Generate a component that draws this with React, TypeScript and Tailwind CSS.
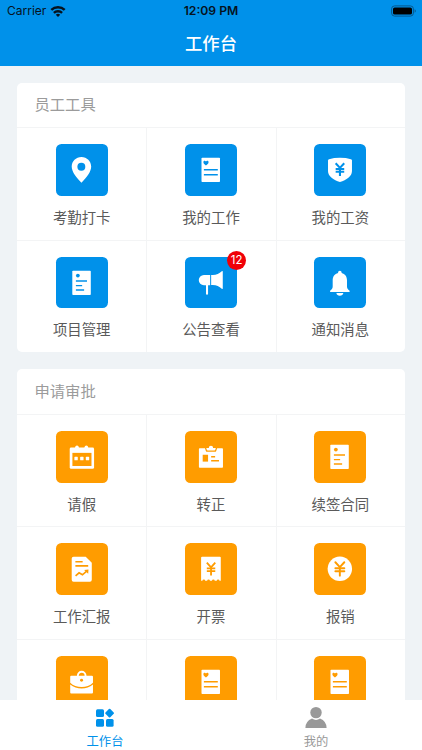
import type { ReactNode } from "react";
import { JapaneseYen } from "lucide-react";

type Tone = "blue" | "orange";
type Item = { label: string; icon: (c: string) => ReactNode; badge?: number };

const BLUE = "#0091ea";
const ORANGE = "#ff9c00";

const pin = (c: string) => (
  <>
    <path d="M25.6 13c-5.5 0-9.8 4.3-9.8 9.7 0 5.6 4.8 10.8 9.8 16.3 5-5.5 9.8-10.7 9.8-16.3 0-5.4-4.3-9.7-9.8-9.7Z" />
    <circle cx="25.5" cy="22.8" r="4" fill={c} />
  </>
);

const heartDoc = (c: string) => (
  <>
    <rect x="16.6" y="13.9" width="18.6" height="24.4" rx="0.8" />
    <path d="M21.1 21.6c-1.3-1-2.6-1.9-2.6-3.3 0-1.6 1.9-1.9 2.6-.7.7-1.2 2.6-.9 2.6.7 0 1.4-1.3 2.3-2.6 3.3Z" fill={c} />
    <path d="M19 25.9h14M19 30.9h14" stroke={c} strokeWidth="1.5" />
  </>
);

const shieldYen = (c: string) => (
  <>
    <path d="M14.1 16.6q0-1 1-1.3Q20 13.9 26.1 13.9t11.1 1.4q1 .3 1 1.3v10.6c0 5.2-5.6 9.3-12.1 11-6.5-1.7-12-5.8-12-11Z" />
    <JapaneseYen x="17.5" y="17.2" size={17.2} color={c} strokeWidth={2.9} strokeLinecap="butt" />
  </>
);

const listDoc = (c: string) => (
  <>
    <rect x="16.4" y="13.9" width="18.6" height="24.4" rx="0.8" />
    <circle cx="22" cy="18.7" r="1.9" fill={c} />
    <path d="M20 24.2h11.2M20 28.8h6.3M20 33.3h8.3" stroke={c} strokeWidth="1.5" />
  </>
);

const megaphone = () => (
  <>
    <path d="M19 18h6.3v10.3H23.2V37q0 1-1.05 1T21.1 37v-8.7H19a5.15 5.15 0 0 1 0-10.3Z" />
    <path d="M26.3 18.2h1.7c3.700 0 6.500-1.700 9-3.900q1-.7 1 .4v16.800q0 1-1 .4c-2.500-2.200-5.300-3.700-9-3.700h-1.700Z" />
  </>
);

const bell = () => (
  <>
    <path d="M24.2 16v-.4a1.8 1.8 0 0 1 3.6 0v.4c3.4.8 5.4 3.700 5.4 7.300v6.500c0 1.700.8 2.900 2.600 4.100v1.200H16.200v-1.200c1.800-1.200 2.600-2.400 2.600-4.100v-6.500c0-3.600 2-6.500 5.400-7.300Z" />
    <path d="M22.5 36.2h7c-.3 1.700-1.700 2.700-3.500 2.700s-3.200-1-3.500-2.700Z" />
  </>
);

const calendar = (c: string) => (
  <>
    <rect x="13.8" y="16.7" width="24.5" height="21.4" rx="1.5" />
    <rect x="19.3" y="14.5" width="3.6" height="5" rx="1.8" />
    <rect x="28.7" y="14.5" width="3.6" height="5" rx="1.8" />
    <rect x="16.5" y="22" width="19.2" height="13.2" fill={c} />
    <rect x="18.5" y="26" width="3.4" height="3.4" rx=".6" />
    <rect x="24.3" y="26" width="3.4" height="3.4" rx=".6" />
    <rect x="30" y="26" width="3.4" height="3.4" rx=".6" />
  </>
);

const idCard = (c: string) => (
  <>
    <rect x="14" y="17.3" width="24.2" height="19.6" rx="0.8" />
    <path d="M20 17h12.4l-1 3q-.3.9-1.3.9h-7.800q-1 0-1.300-.9Z" fill={c} />
    <path d="M21.4 17h2.500a2.200 2.200 0 0 1 4.400 0H31l-.5 1.900q-.2.700-1 .7h-6.600q-.8 0-1-.7Z" />
    <rect x="17.8" y="23.9" width="5.4" height="6.9" fill={c} />
    <path d="M26.3 26h4M26.3 29.9h7.9" stroke={c} strokeWidth="1.5" />
  </>
);

const report = (c: string) => (
  <>
    <path d="M17.7 13.8H29.900L36 19.800V37q0 1.900-1.900 1.900H17.700q-1.900 0-1.900-1.900V15.700q0-1.900 1.900-1.900Z" />
    <path d="M19.5 18.8h7.3M19.5 23h12.9" stroke={c} strokeWidth="1.6" />
    <path d="m19.700 33 3.500-3 3.400 2 4.600-3.900" fill="none" stroke={c} strokeWidth="1.7" />
    <path d="M28.300 27.200 32.700 26.600 32.400 31Z" fill={c} />
  </>
);

const receipt = (c: string) => (
  <>
    <path d="M17.2 13.9H35q1 0 1 1V38H16.2V14.900q0-1 1-1Z" />
    <g fill={c}>
      <circle cx="18.900" cy="38" r="1.350" />
      <circle cx="23.700" cy="38" r="1.350" />
      <circle cx="28.500" cy="38" r="1.350" />
      <circle cx="33.300" cy="38" r="1.350" />
    </g>
    <JapaneseYen x="17.700" y="17.700" size={17} color={c} strokeWidth={2.600} strokeLinecap="butt" />
  </>
);

const coin = (c: string) => (
  <>
    <circle cx="26" cy="26" r="12.3" />
    <JapaneseYen x="17" y="17.100" size={18} color={c} strokeWidth={2.600} />
  </>
);

const briefcase = (c: string) => (
  <>
    <path d="M22 20.500v-.8a3.850 3.850 0 0 1 7.700 0v.8" fill="none" stroke="#fff" strokeWidth="1.900" />
    <path d="M15.300 19.900H36.200q1 0 1 1V26.800c-3 2.900-7 4.400-11.400 4.400s-8.500-1.500-11.500-4.400V20.900q0-1 1-1Z" />
    <path d="M14.300 28.700c3.300 2.700 7.200 4.100 11.500 4.100s8.200-1.400 11.400-4.100v8.100q0 1-1 1H15.300q-1 0-1-1Z" />
    <circle cx="25.700" cy="24.500" r="1.500" fill={c} />
  </>
);

const tools: Item[] = [
  { label: "考勤打卡", icon: pin },
  { label: "我的工作", icon: heartDoc },
  { label: "我的工资", icon: shieldYen },
  { label: "项目管理", icon: listDoc },
  { label: "公告查看", icon: megaphone, badge: 12 },
  { label: "通知消息", icon: bell },
];

const approvals: Item[] = [
  { label: "请假", icon: calendar },
  { label: "转正", icon: idCard },
  { label: "续签合同", icon: listDoc },
  { label: "工作汇报", icon: report },
  { label: "开票", icon: receipt },
  { label: "报销", icon: coin },
  { label: "", icon: briefcase },
  { label: "", icon: heartDoc },
  { label: "", icon: heartDoc },
];

function Tile({ item, tone, divider }: { item: Item; tone: Tone; divider: boolean }) {
  const color = tone === "blue" ? BLUE : ORANGE;
  return (
    <div className={`flex h-[112.5px] flex-col items-center border-t border-t-[#f3f4f5] pt-4 ${divider ? "border-l border-l-[#f3f4f5] pr-px" : ""}`}>
      <div className={`relative size-[51.7px] rounded-[5.5px] ${tone === "blue" ? "bg-[#0091ea]" : "bg-[#ff9c00]"}`}>
        <svg viewBox="0 0 52 52" fill="#fff" className="size-full">{item.icon(color)}</svg>
        {item.badge && (
          <span className="absolute -top-[5.5px] -right-[9px] flex size-[18.5px] items-center justify-center rounded-full bg-[#f00008] font-['Inter'] text-[11.5px] leading-none text-white">
            {item.badge}
          </span>
        )}
      </div>
      <span className="mt-[10px] text-[14.4px] leading-[21px] text-[#5a5a5a]">{item.label}</span>
    </div>
  );
}

function Card({ title, items, tone }: { title: string; items: Item[]; tone: Tone }) {
  return (
    <section className="shrink-0 overflow-hidden rounded-[5px] bg-white">
      <h2 className="flex h-[44.7px] items-center pb-[2px] pl-[17.5px] text-[15.3px] text-[#9b9b9b]">{title}</h2>
      <div className="grid grid-cols-3">
        {items.map((item, i) => (
          <Tile key={i} item={item} tone={tone} divider={i % 3 > 0} />
        ))}
      </div>
    </section>
  );
}

function StatusBar() {
  return (
    <div className="grid h-[22px] grid-cols-[1fr_auto_1fr] items-center px-[7px] font-['Inter'] text-[12px] text-[#06131e]">
      <div className="flex items-center gap-[4px]">
        <span className="text-[12px]">Carrier</span>
        <svg viewBox="0 0 16 12" className="-mt-px h-[12px] w-4" fill="none" stroke="#06131e" strokeWidth="2.4">
          <path d="M1.3 4.900a9.600 9.600 0 0 1 13.400 0M3.900 7.900a5.900 5.900 0 0 1 8.200 0" />
          <path d="M8 12 5.800 9.800a3.200 3.200 0 0 1 4.400 0Z" fill="#06131e" stroke="none" />
        </svg>
      </div>
      <span className="text-center text-[12.2px] font-semibold whitespace-nowrap">12:09 PM</span>
      <svg viewBox="0 0 25 12" className="-mt-px -mr-[1px] h-3 w-[25px] justify-self-end">
        <rect x=".6" y=".9" width="21.8" height="10.2" rx="3" fill="none" stroke="#06588d" strokeWidth="1" />
        <rect x="2" y="2.400" width="19" height="7.200" rx="1.700" fill="#000" />
        <path d="M23.600 4.200q1.200.6 1.200 1.800t-1.200 1.800Z" fill="#06588d" />
      </svg>
    </div>
  );
}

export default function App() {
  return (
    <div className="flex h-[750px] w-[422px] flex-col overflow-hidden bg-[#eff3f6] font-['Noto_Sans_CJK_SC',sans-serif]">
      <header className="h-[65.5px] shrink-0 bg-[#0091ea]">
        <StatusBar />
        <h1 className="flex h-[41px] items-center justify-center text-[17.3px] font-medium text-white">工作台</h1>
      </header>
      <main className="flex min-h-0 flex-1 flex-col gap-[17px] overflow-hidden px-[17px] pt-[17px]">
        <Card title="员工工具" items={tools} tone="blue" />
        <Card title="申请审批" items={approvals} tone="orange" />
      </main>
      <nav className="grid h-[50px] shrink-0 grid-cols-2 bg-white text-[12.3px] leading-[18px]">
        <div className="flex flex-col items-center pt-[7px] pr-px text-[#0091ea]">
          <svg viewBox="0 0 20 22" className="h-[22px] w-5" fill="currentColor">
            <rect x="1" y="2.300" width="8" height="7.800" rx="1.500" />
            <rect x="1" y="12" width="8" height="7.800" rx="1.500" />
            <rect x="11" y="12" width="7.600" height="7.800" rx="1.500" />
            <rect x="11.200" y="2.700" width="6.800" height="6.800" rx="1" transform="rotate(45 14.600 6.100)" />
          </svg>
          <span className="mt-[3px]">工作台</span>
        </div>
        <div className="flex flex-col items-center pt-[6px] pr-px text-[#999]">
          <svg viewBox="0 0 22 23" className="h-[23px] w-[22px]" fill="currentColor">
            <circle cx="11" cy="6.600" r="5.700" />
            <path d="M.4 22q0-6.800 6.600-9.500a7 7 0 0 0 8 0q6.600 2.700 6.600 9.500Z" />
          </svg>
          <span className="mt-[3px]">我的</span>
        </div>
      </nav>
    </div>
  );
}
